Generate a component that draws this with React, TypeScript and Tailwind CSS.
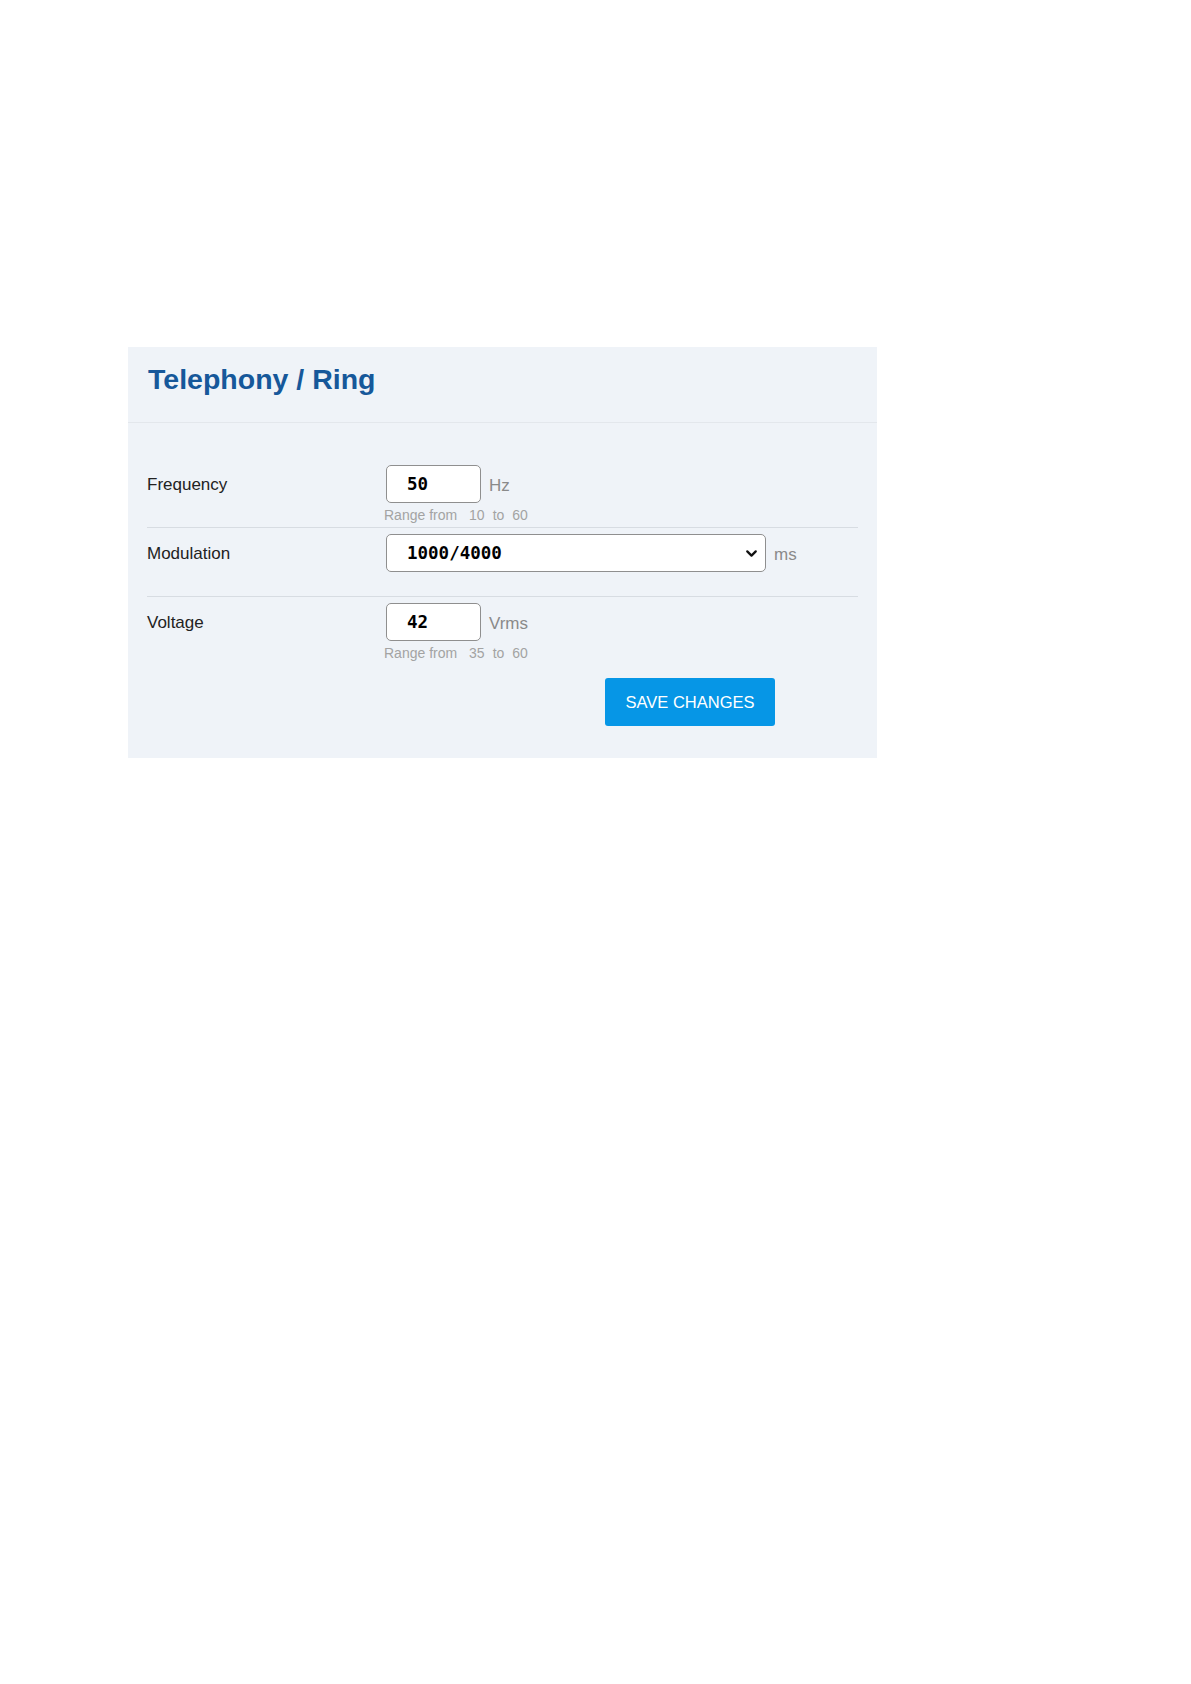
import { ChevronDown } from "lucide-react";

const sans = { fontFamily: '"Liberation Sans", Arial, sans-serif' };

function Hint({ min, max }: { min: number; max: number }) {
  return (
    <div className="-ml-[2px] h-[19px] pt-[4px] text-[14px] leading-[16px] text-[#a3a3a3]">
      Range from <span className="ml-[8px]">{min}</span>
      <span className="ml-[8px]">to</span>
      <span className="ml-[8px]">{max}</span>
    </div>
  );
}

function Row({ label, children, last }: { label: string; children: React.ReactNode; last?: boolean }) {
  return (
    <div className={"flex h-[69px] pt-[6px] " + (last ? "" : "border-b border-[#d7dce2]")}>
      <div className="flex h-[37px] w-[239px] shrink-0 items-center pt-[2px] text-[17px] text-[#222]">{label}</div>
      <div className="flex flex-col">{children}</div>
    </div>
  );
}

export default function App() {
  return (
    <div className="min-h-screen bg-white pt-[347px] pl-[128px]" style={sans}>
      <div className="w-[749px] bg-[#eff3f8]">
        <div className="h-[76px] border-b border-[#e3e7ec] pl-[20px] pt-[15px]">
          <h1 className="text-[28.5px] leading-[34px] font-bold text-[#16589a]">Telephony / Ring</h1>
        </div>

        <div className="px-[19px] pt-[36px] pb-[32px]">
          <Row label="Frequency">
            <div className="flex items-center">
              <div className="flex h-[38px] w-[95px] items-center rounded-[5px] border border-[#8f8f8f] bg-white pl-[20px] font-['DejaVu_Sans_Mono',monospace] text-[17.5px] font-bold text-black">
                50
              </div>
              <span className="ml-[8px] pt-[3px] text-[17px] text-[#8a8a8a]">Hz</span>
            </div>
            <Hint min={10} max={60} />
          </Row>

          <Row label="Modulation">
            <div className="flex items-center">
              <div className="flex h-[38px] w-[380px] items-center justify-between rounded-[5px] border border-[#8f8f8f] bg-white pl-[20px] pr-[5px] font-['DejaVu_Sans_Mono',monospace] text-[17.5px] font-bold text-black">
                1000/4000
                <ChevronDown size={17} strokeWidth={3.2} className="text-[#111]" />
              </div>
              <span className="ml-[8px] pt-[3px] text-[17px] text-[#8a8a8a]">ms</span>
            </div>
          </Row>

          <Row label="Voltage" last>
            <div className="flex items-center">
              <div className="flex h-[38px] w-[95px] items-center rounded-[5px] border border-[#8f8f8f] bg-white pl-[20px] font-['DejaVu_Sans_Mono',monospace] text-[17.5px] font-bold text-black">
                42
              </div>
              <span className="ml-[8px] pt-[3px] text-[17px] text-[#8a8a8a]">Vrms</span>
            </div>
            <Hint min={35} max={60} />
          </Row>

          <div className="mt-[12px] pl-[458px]">
            <button className="flex h-[48px] w-[170px] items-center justify-center rounded-[3px] bg-[#0696e6] text-[16.5px] text-white">
              SAVE CHANGES
            </button>
          </div>
        </div>
      </div>
    </div>
  );
}
